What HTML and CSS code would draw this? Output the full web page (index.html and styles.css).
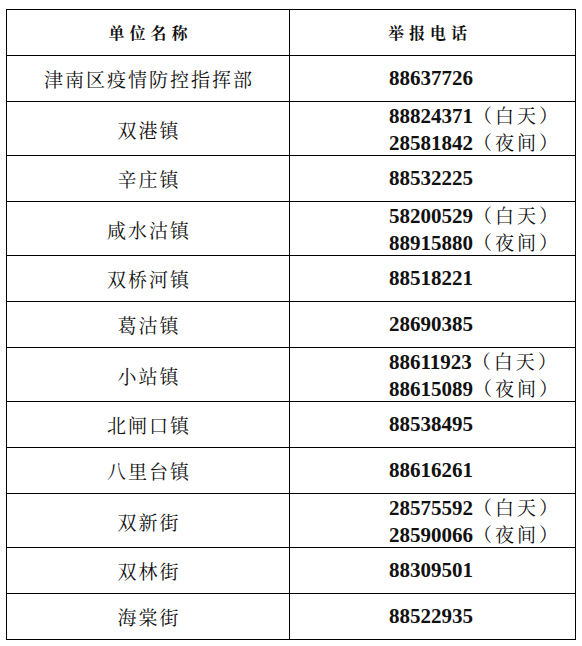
FILE: index.html
```html
<!DOCTYPE html>
<html lang="zh-CN">
<head>
<meta charset="utf-8">
<title>举报电话</title>
<link rel="stylesheet" href="styles.css">
</head>
<body>
<div class="sheet">
  <div class="row head">
    <div class="name"><span class="hd">单位名称</span></div>
    <div class="tel center"><span class="hd">举报电话</span></div>
  </div>
  <div class="row"><div class="name"><span class="cn">津南区疫情防控指挥部</span></div><div class="tel"><span class="num">88637726</span></div></div>
  <div class="row double"><div class="name"><span class="cn">双港镇</span></div><div class="tel"><div><span class="num">88824371</span><span class="note">（白天）</span></div><div><span class="num">28581842</span><span class="note">（夜间）</span></div></div></div>
  <div class="row"><div class="name"><span class="cn">辛庄镇</span></div><div class="tel"><span class="num">88532225</span></div></div>
  <div class="row double"><div class="name"><span class="cn">咸水沽镇</span></div><div class="tel"><div><span class="num">58200529</span><span class="note">（白天）</span></div><div><span class="num">88915880</span><span class="note">（夜间）</span></div></div></div>
  <div class="row"><div class="name"><span class="cn">双桥河镇</span></div><div class="tel"><span class="num">88518221</span></div></div>
  <div class="row"><div class="name"><span class="cn">葛沽镇</span></div><div class="tel"><span class="num">28690385</span></div></div>
  <div class="row double"><div class="name"><span class="cn">小站镇</span></div><div class="tel"><div><span class="num">88611923</span><span class="note">（白天）</span></div><div><span class="num">88615089</span><span class="note">（夜间）</span></div></div></div>
  <div class="row"><div class="name"><span class="cn">北闸口镇</span></div><div class="tel"><span class="num">88538495</span></div></div>
  <div class="row"><div class="name"><span class="cn">八里台镇</span></div><div class="tel"><span class="num">88616261</span></div></div>
  <div class="row double"><div class="name"><span class="cn">双新街</span></div><div class="tel"><div><span class="num">28575592</span><span class="note">（白天）</span></div><div><span class="num">28590066</span><span class="note">（夜间）</span></div></div></div>
  <div class="row"><div class="name"><span class="cn">双林街</span></div><div class="tel"><span class="num">88309501</span></div></div>
  <div class="row"><div class="name"><span class="cn">海棠街</span></div><div class="tel"><span class="num">88522935</span></div></div>
</div>
</body>
</html>
```

FILE: styles.css
```css
html, body {
  margin: 0;
  padding: 0;
  background: #ffffff;
}

body {
  color: #111111;
  font-family: "Noto Serif CJK SC", "Noto Sans CJK SC", serif;
}

.sheet {
  box-sizing: border-box;
  width: 570px;
  margin: 9px 0 0 6px;
  border: 1px solid #000000;
}

.row {
  display: grid;
  grid-template-columns: 283px 1fr;
  box-sizing: border-box;
  height: 46px;
  border-top: 1px solid #000000;
}

.row.head {
  height: 45px;
  border-top: none;
}

.row.double {
  height: 54px;
}

.name {
  box-sizing: border-box;
  border-right: 1px solid #000000;
  display: flex;
  align-items: center;
  justify-content: center;
}

.tel {
  box-sizing: border-box;
  padding-left: 99px;
  display: flex;
  flex-direction: column;
  justify-content: center;
  line-height: 25px;
}

.tel.center {
  padding-left: 0;
  align-items: center;
  padding-right: 10px;
}

.cn {
  font-size: 19px;
  letter-spacing: 2px;
  margin-right: -2px;
  line-height: 1;
}

.hd {
  font-size: 16px;
  font-weight: 700;
  letter-spacing: 5px;
  margin-right: -5px;
  line-height: 1;
}

.num {
  font-family: "Liberation Serif", "Times New Roman", serif;
  font-weight: 700;
  font-size: 21px;
}

.note {
  font-size: 19px;
  letter-spacing: 3px;
}
```
